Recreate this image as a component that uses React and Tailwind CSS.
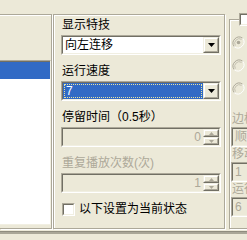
function Sunken({ className = '', inner = '', children }) {
  return (
    <div className={`border border-t-[#aca899] border-l-[#aca899] border-r-white border-b-white ${className}`}>
      <div className={`h-full w-full border border-t-[#716f64] border-l-[#716f64] border-r-[#f1efe2] border-b-[#f1efe2] ${inner}`}>
        {children}
      </div>
    </div>
  )
}

function Arrow({ up, color = '#000', w = 7 }) {
  const h = Math.ceil(w / 2)
  return (
    <svg width={w} height={h} viewBox={`0 0 ${w} ${h}`}>
      <polygon points={up ? `0,${h} ${w},${h} ${w / 2},0` : `0,0 ${w},0 ${w / 2},${h}`} fill={color} />
    </svg>
  )
}

function Raised({ className = '', children }) {
  return (
    <div className={`border border-t-[#f1efe2] border-l-[#f1efe2] border-r-[#716f64] border-b-[#716f64] ${className}`}>
      <div className="h-full w-full border border-t-white border-l-white border-r-[#aca899] border-b-[#aca899] bg-[#ece9d8] flex items-center justify-center">
        {children}
      </div>
    </div>
  )
}

function Combo({ value, focused }) {
  return (
    <Sunken className="w-[160px] h-[20px]" inner="bg-white flex">
      {focused ? (
        <div className="flex-1 bg-[#316ac5] p-[1px]">
          <div className="h-full border border-dotted border-[#e8e4a0] text-white leading-[12px] pl-[1px]">{value}</div>
        </div>
      ) : (
        <div className="flex-1 leading-[16px] pl-[2px]">{value}</div>
      )}
      <Raised className="w-[16px] h-[16px]">
        <Arrow />
      </Raised>
    </Sunken>
  )
}

function Spin({ value }) {
  return (
    <Sunken className="w-[160px] h-[20px]" inner="bg-[#ece9d8] flex">
      <div className="flex-1 text-right pr-[2px] leading-[16px] text-[#aca899]">{value}</div>
      <div className="w-[16px] flex flex-col">
        <Raised className="h-[8px]">
          <Arrow up color="#aca899" w={5} />
        </Raised>
        <Raised className="h-[8px]">
          <Arrow color="#aca899" w={5} />
        </Raised>
      </div>
    </Sunken>
  )
}

function Radio({ checked }) {
  return (
    <svg width="13" height="13" viewBox="0 0 13 13">
      <circle cx="6.5" cy="6.5" r="5.5" fill="#ece9d8" />
      <path d="M10.7 2.3 A6 6 0 0 0 2.3 10.7" stroke="#aca899" fill="none" />
      <path d="M2.3 10.7 A6 6 0 0 0 10.7 2.3" stroke="#fff" fill="none" />
      <path d="M9.6 3.4 A4.5 4.5 0 0 0 3.4 9.6" stroke="#c5c2b2" fill="none" />
      {checked && <circle cx="6.5" cy="6.5" r="1.8" fill="#aca899" />}
    </svg>
  )
}

export default function App() {
  return (
    <div className="w-[247px] h-[240px] overflow-hidden bg-[#ece9d8] text-[12px] text-black font-['Liberation_Sans','Noto_Sans_CJK_SC',sans-serif] flex flex-col">
      <div className="h-[14px] shrink-0" />
      <div className="flex items-start h-[215px] shrink-0">
        {/* left list pane */}
        <div className="w-[52px] h-[215px] shrink-0 border-t border-r border-b border-[#aca899] shadow-[inset_0_1px_0_#fff,1px_1px_0_#fff] flex flex-col">
          <div className="h-[45px] shrink-0" />
          <div className="h-[165px] border-t border-[#aca899] border-b border-b-[#f1efe2] border-r border-r-[#f1efe2] bg-white shadow-[inset_0_1px_0_#716f64]">
            <div className="mt-[1px] h-[17px] bg-[#316ac5]" />
          </div>
        </div>

        {/* effect group */}
        <div className="ml-[1px] w-[172px] h-[215px] shrink-0 border border-[#aca899] shadow-[inset_1px_1px_0_#fff,1px_1px_0_#fff] pl-[7px] pt-[2px]">
          <div className="h-[16px] leading-[16px] pl-[1px]">显示特技</div>
          <div className="mt-[2px]"><Combo value="向左连移" /></div>
          <div className="mt-[8px] h-[16px] leading-[16px] pl-[1px]">运行速度</div>
          <div className="mt-[2px]"><Combo value="7" focused /></div>
          <div className="mt-[8px] h-[16px] leading-[16px] pl-[1px]">停留时间（0.5秒）</div>
          <div className="mt-[2px]"><Spin value="0" /></div>
          <div className="mt-[8px] h-[16px] leading-[16px] pl-[1px] text-[#aca899]">重复播放次数(次)</div>
          <div className="mt-[2px]"><Spin value="1" /></div>
          <div className="mt-[10px] flex items-center pl-[1px]">
            <Sunken className="w-[13px] h-[13px]" inner="bg-white" />
            <span className="ml-[4px] leading-[13px]">以下设置为当前状态</span>
          </div>
        </div>

        {/* right group */}
        <div className="ml-[4px] mt-[5px] w-[40px] h-[210px] shrink-0 relative border border-[#aca899] shadow-[inset_1px_1px_0_#fff,1px_1px_0_#fff] pl-[2px] pt-[16px]">
          <div className="absolute left-[9px] top-[-7px]">
            <Sunken className="w-[13px] h-[13px]" inner="bg-white" />
          </div>
          <div className="flex flex-col gap-[10px]">
            <Radio checked />
            <Radio />
            <Radio />
          </div>
          <div className="mt-[17px] h-[15px] leading-[15px] text-[#aca899] whitespace-nowrap">边框方向</div>
          <Sunken className="w-[60px] h-[20px] -ml-[1px]" inner="bg-[#ece9d8] leading-[16px] pl-[2px] text-[#aca899] whitespace-nowrap">顺时针</Sunken>
          <div className="h-[15px] leading-[15px] text-[#aca899] whitespace-nowrap">移动方式</div>
          <Sunken className="w-[60px] h-[20px] -ml-[1px]" inner="bg-[#ece9d8] leading-[16px] pl-[2px] text-[#aca899]">1</Sunken>
          <div className="h-[15px] leading-[15px] text-[#aca899] whitespace-nowrap">运行速度</div>
          <Sunken className="w-[60px] h-[20px] -ml-[1px]" inner="bg-[#ece9d8] leading-[16px] pl-[2px] text-[#aca899]">6</Sunken>
        </div>
      </div>
      <div className="mt-[2px] h-[3px] shrink-0 bg-[#a9a697] border-t border-[#8f8c7e]" />
    </div>
  )
}
